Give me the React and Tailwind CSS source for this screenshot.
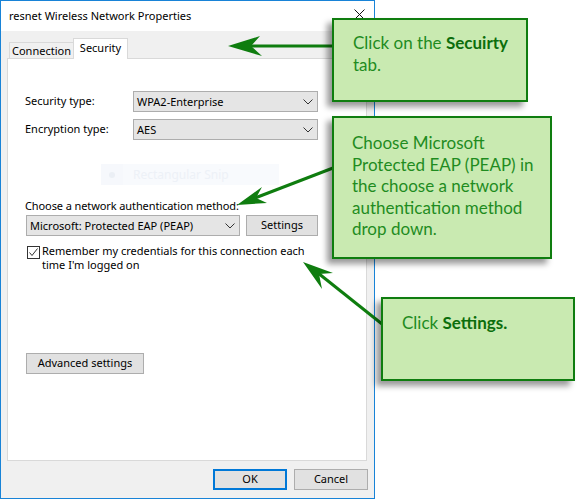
import React from 'react';

const ui = { fontFamily: '"Noto Sans", "Open Sans", sans-serif' };
const callout = { fontFamily: 'Lato, "Open Sans", sans-serif' };

const Chevron = () => (
  <svg width="10" height="6" viewBox="0 0 10 6" className="shrink-0">
    <polyline points="0.5,0.5 5,5 9.5,0.5" fill="none" stroke="#333" strokeWidth="1" />
  </svg>
);

const Dropdown = ({ value, className }) => (
  <div className={`h-[21px] bg-[#e5e5e5] border border-[#adadad] flex items-center justify-between pl-[3px] pr-[4px] ${className}`}>
    <span className="leading-none">{value}</span>
    <Chevron />
  </div>
);

const Button = ({ children, className = '' }) => (
  <div className={`h-[21px] bg-[#e1e1e1] border border-[#adadad] flex items-center justify-center ${className}`}>
    {children}
  </div>
);

const Callout = ({ className, children }) => (
  <div
    className={`absolute bg-[#c9eab1] border-2 border-[#0f7d0f] shadow-[-5px_5px_6px_rgba(0,0,0,0.4)] text-[17px] leading-[21.5px] text-[#1f8c1f] ${className}`}
    style={callout}
  >
    {children}
  </div>
);

export default function App() {
  return (
    <div className="relative w-[588px] h-[500px] bg-white overflow-hidden text-[11px] text-black" style={ui}>
      {/* dialog */}
      <div className="w-[375px] h-[499px] border border-[#1883d7] flex flex-col">
        <div className="h-[30px] bg-white flex items-center justify-between pl-[8px] pr-[9px]">
          <span className="text-[11px]">resnet Wireless Network Properties</span>
          <svg width="11" height="11" viewBox="0 0 11 11" className="mt-[-4px]">
            <path d="M0.5 0.5 L10.5 10.5 M10.5 0.5 L0.5 10.5" stroke="#111" strokeWidth="1" />
          </svg>
        </div>

        <div className="flex-1 bg-[#f0f0f0] flex flex-col pt-[7px]">
          {/* tabs */}
          <div className="flex items-end h-[21px] ml-[8px]">
            <div className="h-[17px] w-[64px] border-t border-l border-[#d9d9d9] bg-[#f0f0f0] flex items-center justify-center">
              Connection
            </div>
            <div className="relative z-10 h-[21px] w-[55px] border-t border-l border-r border-[#d9d9d9] bg-white flex items-start justify-center pt-[1px]">
              Security
            </div>
          </div>

          {/* panel */}
          <div className="ml-[6px] -mt-px w-[360px] h-[403px] border border-[#d9d9d9] bg-white pl-[17px] pt-[32px] flex flex-col">
            <div className="flex items-center">
              <span className="w-[108px]">Security type:</span>
              <Dropdown value="WPA2-Enterprise" className="w-[185px]" />
            </div>
            <div className="flex items-center mt-[7px]">
              <span className="w-[108px]">Encryption type:</span>
              <Dropdown value="AES" className="w-[185px]" />
            </div>

            {/* faint leftover snip toolbar */}
            <div className="ml-[76px] mt-[24px] w-[178px] h-[21px] bg-[#f8fafd] flex items-center">
              <div className="w-[22px] h-full flex items-center justify-center bg-[#f6f8fc]">
                <div className="w-[6px] h-[6px] rounded-full bg-[#ebeff5]" />
              </div>
              <span className="ml-[10px] text-[12px] text-[#edf1f7]">Rectangular Snip</span>
            </div>

            <div className="mt-[13px] leading-[15px] tracking-[-0.1px]">Choose a network authentication method:</div>
            <div className="flex items-center mt-[2px] ml-px">
              <Dropdown value="Microsoft: Protected EAP (PEAP)" className="w-[214px]" />
              <Button className="w-[72px] ml-[6px]">Settings</Button>
            </div>
            <div className="flex items-start mt-[8px] ml-[2px]">
              <div className="w-[13px] h-[13px] border border-[#333] bg-white flex items-center justify-center shrink-0 mt-[2px]">
                <svg width="11" height="11" viewBox="0 0 11 11">
                  <polyline points="1.5,5.5 4,8.5 9.5,1.5" fill="none" stroke="#333" strokeWidth="1" />
                </svg>
              </div>
              <div className="ml-[2px] leading-[14px]">
                Remember my credentials for this connection each
                <br />
                time I'm logged on
              </div>
            </div>

            <Button className="w-[118px] ml-px mt-[81px]">Advanced settings</Button>
          </div>

          {/* footer */}
          <div className="flex justify-end gap-[7px] mt-[8px] pr-[6px]">
            <div className="w-[74px] h-[21px] bg-[#e1e1e1] border-2 border-[#0078d7] flex items-center justify-center">OK</div>
            <Button className="w-[74px]">Cancel</Button>
          </div>
        </div>
      </div>

      {/* arrows */}
      <svg className="absolute inset-0 pointer-events-none" width="588" height="500" viewBox="0 0 588 500">
        <g stroke="#0f7d0f" strokeWidth="3" fill="none">
          <line x1="333" y1="46" x2="250" y2="46" />
          <line x1="333" y1="168" x2="255" y2="198" />
          <line x1="382" y1="324" x2="318" y2="273" />
        </g>
        <g fill="#0f7d0f">
          <polygon points="228,46 260,36 251,46 262,56" />
          <polygon points="237,205 262,187 256,198 267,203" />
          <polygon points="303,262 333,273 319,274 322,289" />
        </g>
      </svg>

      {/* callouts */}
      <Callout className="left-[332px] top-[18px] w-[196px] h-[84px] pl-[19px] pt-[12px]">
        Click on the <b className="text-[#0c6e0c]">Secuirty</b>
        <br />
        tab.
      </Callout>
      <Callout className="left-[332px] top-[116px] w-[220px] h-[143px] pl-[18px] pt-[14px]">
        Choose Microsoft
        <br />
        Protected EAP (PEAP) in
        <br />
        the choose a network
        <br />
        authentication method
        <br />
        drop down.
      </Callout>
      <Callout className="left-[381px] top-[297px] w-[194px] h-[84px] pl-[19px] pt-[13px]">
        Click <b className="text-[#0c6e0c]">Settings.</b>
      </Callout>
    </div>
  );
}
